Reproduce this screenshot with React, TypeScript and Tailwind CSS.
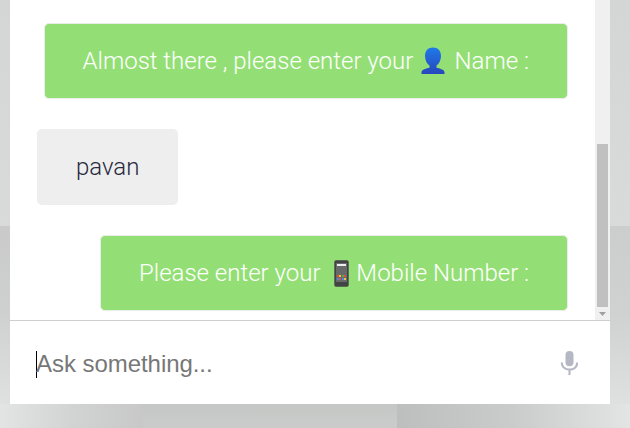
import type { ReactNode } from "react";

function PersonIcon() {
  return (
    <svg className="mr-[3px] ml-[2px] h-[28px] w-[24px] shrink-0" viewBox="0 0 24 28">
      <defs>
        <linearGradient id="person" x1="0" y1="0" x2="0" y2="1">
          <stop offset="0" stopColor="#1f7ae8" />
          <stop offset="1" stopColor="#2846bd" />
        </linearGradient>
      </defs>
      <path
        fill="url(#person)"
        d="M12 .5C7 .5 4 3.800 4 9c0 4.200 2 7.900 4.500 9.600v2.200C4 21.500.500 23 .500 25.500V27h23v-1.500c0-2.500-3.500-4-8-4.700v-2.200C18 16.900 20 13.200 20 9 20 3.800 17 .5 12 .5Z"
      />
    </svg>
  );
}

function PhoneIcon() {
  return (
    <svg className="h-[27px] w-[15px] shrink-0" viewBox="0 0 15 27">
      <rect x=".3" y=".3" width="14.400" height="26.400" rx="1.700" fill="#424344" />
      <rect x="2" y="3" width="11" height="19" fill="#686a6a" />
      <rect x="3" y="4" width="9" height="2" fill="#eeeeee" />
      <path fill="#e94b3c" d="M3 15h2v2H3zM10 15h2v2h-2zM5 18h2v2H5z" />
      <path fill="#f9c22e" d="M5 15h2v2H5zM10 18h2v2h-2z" />
      <path fill="#3c8df0" d="M8 18h2v2H8zM3 18h2v2H3z" />
      <path fill="#4dac59" d="M8 15h2v2H8z" />
    </svg>
  );
}

function MicIcon() {
  return (
    <svg className="h-[26px] w-[18px]" viewBox="0 0 18 26">
      <rect x="5.500" y="1" width="8" height="15.300" rx="4" fill="#b5b8c4" />
      <path d="M1.700 12.500c.3 4.200 3.200 7 7.800 7s7.500-2.800 7.800-7M9.500 19.500V25" fill="none" stroke="#b5b8c4" strokeWidth="2.100" />
    </svg>
  );
}

function BotMessage({ children, width }: { children: ReactNode; width: string }) {
  return (
    <div className={`${width} flex h-[76px] items-center self-end whitespace-pre rounded-[5px] border border-[#e9eee8] bg-[#94df75] pl-[38px] text-white`}>
      {children}
    </div>
  );
}

export default function App() {
  return (
    <main className="relative flex h-[428px] w-[630px] overflow-hidden bg-[#d4d6d5] px-[10px] font-[Roboto,sans-serif]">
      <div className="absolute inset-x-0 top-0 h-[226px] bg-linear-to-b from-[#d3d6d5] to-[#d8dbd9]" />
      <div className="absolute top-[226px] left-0 h-[178px] w-[10px] bg-linear-to-b from-[#c9cac9] via-[#cfd1d0] to-[#dfe1e0]" />
      <div className="absolute top-[226px] right-0 h-[178px] w-[20px] bg-linear-to-b from-[#cccecd] via-[#d0d2d1] to-[#dfe1e0]" />
      <div className="absolute top-[404px] left-0 h-[24px] w-[143px] bg-linear-to-r from-[#e3e5e4] via-[#d2d4d3] to-[#c7c8c7]" />
      <div className="absolute top-[404px] left-[143px] h-[24px] w-[254px] bg-linear-to-b from-[#c4c7c5] to-[#cbcbcb]" />
      <div className="absolute top-[404px] right-0 h-[24px] w-[233px] bg-linear-to-r from-[#bcbfbd] via-[#cacccb] to-[#e3e5e4]" />
      <section className="relative flex h-[404px] w-[600px] flex-col bg-white">
        <div className="flex h-[320px]">
          <div className="flex w-[585px] flex-col pt-[23px] pr-[27px] pl-[27px] text-[24px] leading-[30px] font-light">
            <BotMessage width="w-[524px]">
              <span className="-ml-[0.500px]">Almost there , please enter your </span>
              <PersonIcon />
              <span className="ml-[0.500px]"> Name :</span>
            </BotMessage>
            <div className="mt-[30px] flex h-[76px] w-[141px] items-center self-start rounded-[5px] bg-[#eeeeee] pl-[39px] text-[#27293d]">pavan</div>
            <div className="mt-[30px] flex flex-col">
              <BotMessage width="w-[468px]">
                <span>Please enter your </span>
                <span className="mr-[7px] ml-[8px]"><PhoneIcon /></span>
                <span>Mobile Number :</span>
              </BotMessage>
            </div>
          </div>
          <div className="flex w-[15px] flex-col items-center bg-[#f0f0f0] pt-[144px]">
            <div className="h-[163px] w-[11px] bg-[#c0c0c0]" />
            <svg className="mt-[5px] h-[4px] w-[7px]" viewBox="0 0 7 4"><path d="M0 0h7L3.500 4Z" fill="#a0a0a0" /></svg>
          </div>
        </div>
        <div className="flex h-[84px] items-center justify-between border-t border-[#cfcfcf] pr-[32px] pl-[26px]">
          <div className="flex items-center">
            <div className="mt-[3px] h-[27px] w-px bg-black" />
            <span className="-ml-px mt-[2px] font-['Liberation_Sans',sans-serif] text-[24px] tracking-[-0.050px] text-[#777777]">Ask something...</span>
          </div>
          <MicIcon />
        </div>
      </section>
    </main>
  );
}
